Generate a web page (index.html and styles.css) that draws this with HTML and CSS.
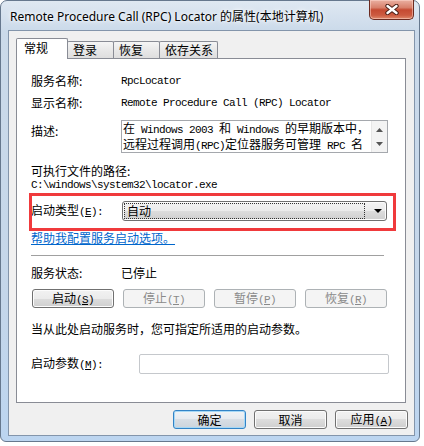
FILE: index.html
```html
<!DOCTYPE html>
<html>
<head>
	<meta charset="utf-8">
	<title>Remote Procedure Call (RPC) Locator 的属性</title>
	<link rel="stylesheet" href="styles.css">
</head>
<body>
	<div class="window">
		<div class="titlebar">
			<span class="title">Remote Procedure Call (RPC) Locator 的属性(本地计算机)</span>
			<button class="close">
				<svg width="14" height="11" viewBox="0 0 14 11">
					<path d="M2.5 2 L11.5 9 M11.5 2 L2.5 9" stroke="#4b1f17" stroke-width="4.4" stroke-linecap="round"/>
					<path d="M2.5 2 L11.5 9 M11.5 2 L2.5 9" stroke="#fff" stroke-width="2.4" stroke-linecap="round"/>
				</svg>
			</button>
		</div>
		<div class="client">
			<div class="tabs">
				<div class="tab active">常规</div>
				<div class="tab">登录</div>
				<div class="tab">恢复</div>
				<div class="tab">依存关系</div>
			</div>
			<div class="panel">
				<div class="field">
					<span class="label">服务名称:</span>
					<span class="mono">RpcLocator</span>
				</div>
				<div class="field second">
					<span class="label">显示名称:</span>
					<span class="mono">Remote Procedure Call (RPC) Locator</span>
				</div>
				<div class="field desc-row">
					<span class="label desc-label">描述:</span>
					<div class="desc">
						<div class="desc-text">在<span class="mono"> Windows 2003 </span>和<span class="mono"> Windows </span>的早期版本中，<br>远程过程调用<span class="mono">(RPC)</span>定位器服务可管理<span class="mono"> RPC </span>名</div>
						<div class="scrollbar">
							<svg width="7" height="4" viewBox="0 0 7 4"><path d="M0 4 L3.5 0 L7 4 Z" fill="#555"/></svg>
							<svg width="7" height="4" viewBox="0 0 7 4"><path d="M0 0 L7 0 L3.5 4 Z" fill="#555"/></svg>
						</div>
					</div>
				</div>
				<div class="path-label">可执行文件的路径:</div>
				<div class="path mono">C:\windows\system32\locator.exe</div>
				<div class="field combo-row">
					<span class="label">启动类型<span class="mono">(<u>E</u>):</span></span>
					<div class="combo">
						<span class="combo-value">自动</span>
						<svg width="8" height="4" viewBox="0 0 8 4"><path d="M0 0 L8 0 L4 4 Z" fill="#000"/></svg>
					</div>
					<span class="highlight"></span>
				</div>
				<a class="help" href="#">帮助我配置服务启动选项。</a>
				<div class="separator"></div>
				<div class="field status">
					<span class="label">服务状态:</span>
					<span>已停止</span>
				</div>
				<div class="actions">
					<button class="btn">启动<span class="mono">(<u>S</u>)</span></button>
					<button class="btn" disabled>停止<span class="mono">(<u>T</u>)</span></button>
					<button class="btn" disabled>暂停<span class="mono">(<u>P</u>)</span></button>
					<button class="btn" disabled>恢复<span class="mono">(<u>R</u>)</span></button>
				</div>
				<div class="hint">当从此处启动服务时，您可指定所适用的启动参数。</div>
				<div class="field params">
					<span class="label">启动参数<span class="mono">(<u>M</u>):</span></span>
					<input class="param-input" type="text">
				</div>
			</div>
			<div class="footer">
				<button class="btn default">确定</button>
				<button class="btn">取消</button>
				<button class="btn">应用<span class="mono">(<u>A</u>)</span></button>
			</div>
		</div>
	</div>
</body>
</html>
```

FILE: styles.css
```css
body{
	margin: 0;
	background: #fff;
	font-family: "Noto Sans CJK SC", "Noto Sans", sans-serif;
	font-size: 12px;
	color: #000;
}
.window{
	width: 420px;
	height: 442px;
	box-sizing: border-box;
	border: 1px solid #66788e;
	border-radius: 7px 7px 6px 6px;
	background: linear-gradient(#dfe8f2, #cbdaea 30px, #c4d6ea 300px, #bcd5f0);
	display: flex;
	flex-direction: column;
}
.titlebar{
	height: 29px;
	display: flex;
	align-items: flex-start;
	padding-left: 9px;
}
.title{
	font-family: "Noto Sans", "Noto Sans CJK SC", sans-serif;
	font-size: 12px;
	line-height: 17px;
	padding-top: 7px;
	color: #000;
	text-shadow: 0 0 6px #fff, 0 0 3px #fff;
}
.close{
	margin: -1px 5px 0 auto;
	width: 45px;
	height: 20px;
	border: 1px solid #6b2a20;
	border-top: none;
	border-radius: 0 0 5px 5px;
	background: linear-gradient(#eab0a2, #d8806b 40%, #c54a32 52%, #cc5a40 80%, #df8a6c);
	box-shadow: inset 0 0 0 1px rgba(255, 220, 210, 0.5);
	padding: 0;
	display: flex;
	align-items: center;
	justify-content: center;
}
.client{
	margin-left: 7px;
	width: 407px;
	height: 406px;
	box-sizing: border-box;
	border: 1px solid #8395ab;
	background: #f0f0f0;
	padding: 7px 0 0 7px;
}
.tabs{
	display: flex;
	align-items: flex-end;
	height: 20px;
}
.tab{
	height: 17px;
	min-width: 47px;
	box-sizing: border-box;
	border: 1px solid #898c95;
	border-bottom: none;
	border-radius: 2px 2px 0 0;
	background: linear-gradient(#f5f5f5, #e8e8e8 50%, #dedede);
	line-height: 15px;
	padding: 0 4px 0 5px;
	margin-left: -1px;
}
.tab.active{
	position: relative;
	z-index: 1;
	height: 21px;
	min-width: 52px;
	margin-left: 0;
	margin-bottom: -1px;
	background: #fff;
	line-height: 18px;
	padding-left: 7px;
}
.panel{
	width: 390px;
	height: 345px;
	box-sizing: border-box;
	border: 1px solid #898c95;
	background: #fff;
	padding: 14px 0 0 14px;
}
.mono{
	font-family: "Liberation Mono", monospace;
	font-size: 11px;
	letter-spacing: -0.6px;
}
.field{
	display: grid;
	grid-template-columns: 90px 1fr;
	align-items: center;
	height: 16px;
	line-height: 16px;
}
.second{
	margin-top: 6px;
}
.desc-row{
	margin-top: 9px;
	height: 33px;
	align-items: start;
}
.desc-label{
	padding-top: 3px;
}
.desc{
	width: 267px;
	height: 33px;
	box-sizing: border-box;
	border: 1px solid #a5a8ad;
	display: flex;
}
.desc-text{
	flex: 1;
	padding-left: 1px;
	line-height: 14px;
	white-space: nowrap;
}
.scrollbar{
	width: 16px;
	background: #f3f3f3;
	border-left: 1px solid #e6e6e6;
	display: flex;
	flex-direction: column;
	align-items: center;
	justify-content: space-between;
	padding: 7px 0 6px;
	box-sizing: border-box;
}
.path-label{
	margin-top: 11px;
	line-height: 14px;
}
.path{
	line-height: 14px;
}
.combo-row{
	position: relative;
	margin-top: 9px;
	height: 20px;
	grid-template-columns: 91px 1fr;
}
.combo{
	width: 265px;
	height: 20px;
	box-sizing: border-box;
	border: 1px solid #707070;
	border-radius: 3px;
	background: linear-gradient(#f3f3f3, #ebebeb 50%, #dddddd 50%, #cfcfcf);
	box-shadow: inset 0 0 0 1px #fbfbfb;
	display: flex;
	align-items: center;
	padding: 0 4px 0 2px;
}
.combo-value{
	flex: 1;
	height: 14px;
	line-height: 14px;
	padding-left: 2px;
	margin-right: 10px;
	outline: 1px dotted #333;
}
.highlight{
	position: absolute;
	left: -2px;
	top: -8px;
	width: 367px;
	height: 38px;
	box-sizing: border-box;
	border: 3px solid #f03a3c;
}
.help{
	display: block;
	margin-top: 10px;
	line-height: 14px;
	color: #0066cc;
	text-decoration: underline;
	width: max-content;
}
.separator{
	margin-top: 10px;
	width: 353px;
	height: 1px;
	background: #a0a0a0;
}
.status{
	margin-top: 10px;
	height: 14px;
	line-height: 14px;
}
.actions{
	margin-top: 9px;
	margin-left: 1px;
	display: flex;
	gap: 9px;
}
.btn{
	width: 82px;
	height: 19px;
	box-sizing: border-box;
	border: 1px solid #707070;
	border-radius: 3px;
	background: linear-gradient(#f2f2f2, #ebebeb 50%, #dddddd 50%, #cfcfcf);
	box-shadow: inset 0 0 0 1px #fcfcfc;
	font-family: inherit;
	font-size: 12px;
	line-height: 15px;
	color: #000;
	padding: 0;
}
.btn:disabled{
	border-color: #adb2b5;
	background: #f4f4f4;
	box-shadow: none;
	color: #8a8a8a;
}
.hint{
	margin-top: 14px;
	line-height: 14px;
}
.params{
	margin-top: 18px;
	height: 20px;
	grid-template-columns: 108px 1fr;
}
.param-input{
	width: 250px;
	height: 20px;
	box-sizing: border-box;
	border: 1px solid #c5c8cc;
	border-radius: 2px;
	background: #fff;
}
.footer{
	display: flex;
	justify-content: flex-end;
	gap: 8px;
	margin-top: 7px;
	padding-right: 6px;
}
.footer .btn{
	width: 73px;
}
.btn.default{
	border-color: #3283c6;
	box-shadow: inset 0 0 0 1px #a6d8f6;
	background: linear-gradient(#f0f3f6, #e6eaef 50%, #d8dee5 50%, #ccd4dc);
}
```
